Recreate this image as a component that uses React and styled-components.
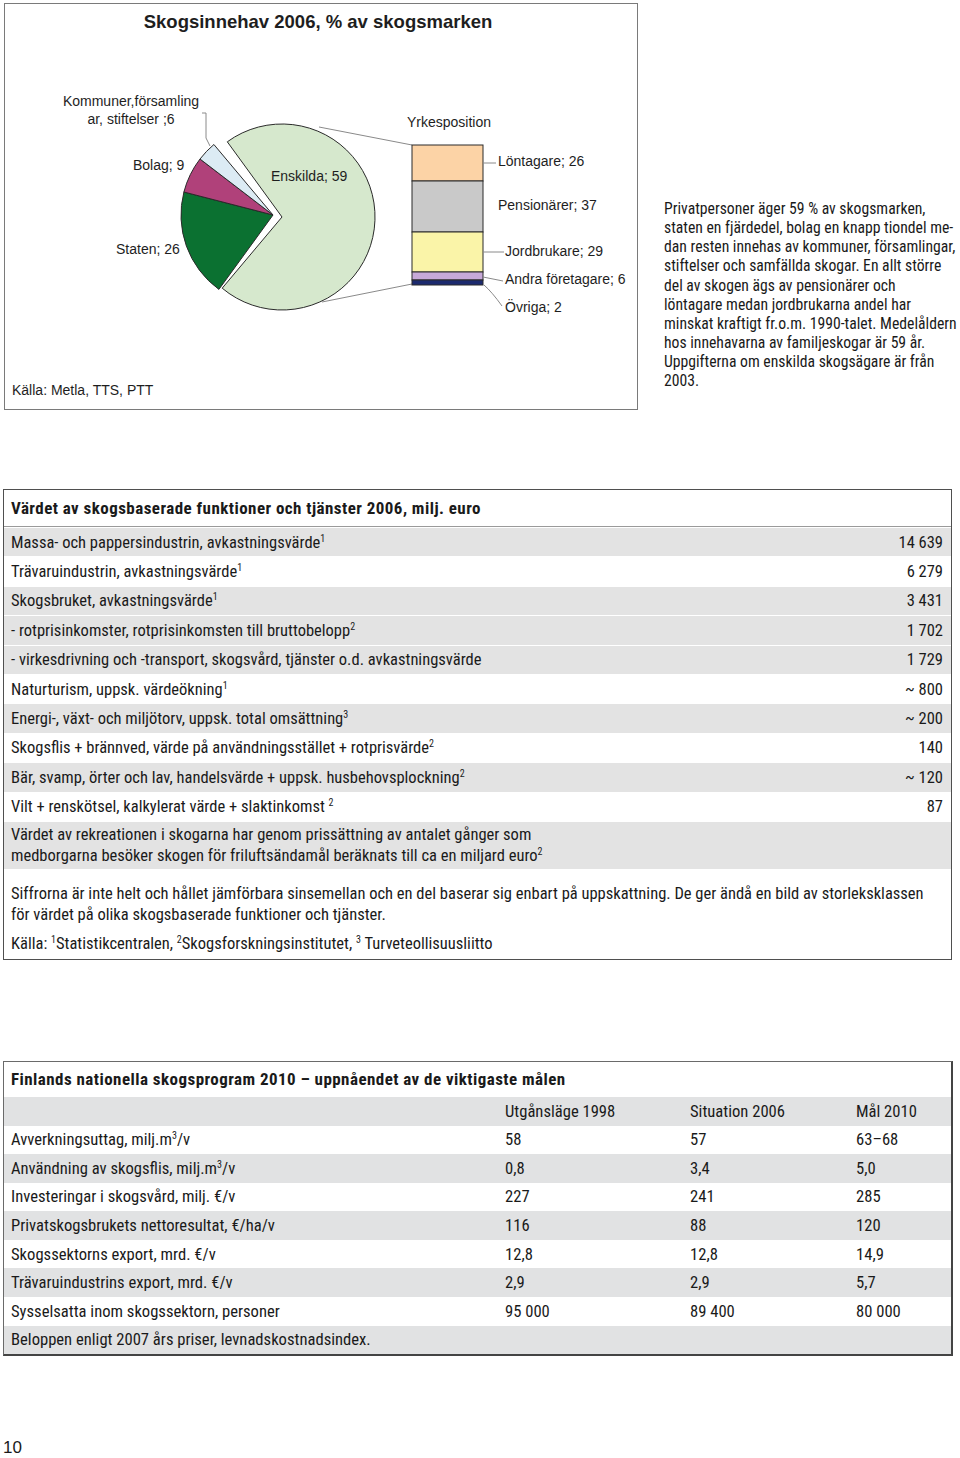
import React from 'react';
import styled, { createGlobalStyle } from 'styled-components';

const GlobalStyle = createGlobalStyle`
  html, body {
    margin: 0;
    padding: 0;
    background: #fff;
  }
  body {
    font-family: Roboto, "Liberation Sans", Arial, sans-serif;
    font-stretch: 75%;
    color: #1a1a1a;
  }
`;

const Page = styled.div`
  width: 960px;
`;

const TopSection = styled.div`
  display: flex;
  align-items: flex-start;
  padding: 3px 0 0 4px;
`;

const ChartFrame = styled.div`
  width: 634px;
  height: 407px;
  box-sizing: border-box;
  border: 1px solid #7a7a7a;
  background: #fff;

  svg {
    display: block;
  }
`;

const Caption = styled.div`
  margin: 196px 0 0 26px;
  font-size: 15.7px;
  line-height: 19.15px;
  color: #1a1a1a;
`;

const CaptionLine = styled.span`
  display: block;
  white-space: nowrap;
`;

const ValueTable = styled.div`
  margin: 79px 0 0 3px;
  width: 949px;
  box-sizing: border-box;
  border: 1px solid #4f4f4f;
  font-size: 16.5px;
`;

const TableTitle = styled.div`
  height: ${p => p.h}px;
  display: flex;
  align-items: center;
  padding: 0 7px;
  font-weight: bold;
  font-size: 17px;
  letter-spacing: 0.45px;
  border-bottom: ${p => (p.ruled ? '1px solid #9a9a9a' : 'none')};
  box-sizing: border-box;
  white-space: nowrap;
`;

const ValueRow = styled.div`
  display: flex;
  justify-content: space-between;
  align-items: center;
  height: ${p => p.h || 29.4}px;
  padding: 0 8px 0 7px;
  box-sizing: border-box;
  background: ${p => (p.shade ? '#e3e3e3' : '#fff')};
  border-top: 1px solid #fff;
  line-height: 21px;
  white-space: nowrap;
`;

const Sup = styled.sup`
  font-size: 10px;
  line-height: 0;
  vertical-align: 0;
  position: relative;
  top: -6px;
`;

const Footnotes = styled.div`
  padding: 14px 7px 5px;
  line-height: 21px;
`;

const FootLine = styled.div`
  margin-bottom: ${p => (p.gap ? 8 : 0)}px;
  white-space: nowrap;
`;

const GoalTable = styled.div`
  margin: 101px 0 0 3px;
  width: 950px;
  box-sizing: border-box;
  border: 1px solid #6a6a6a;
  border-right: 2px solid #444;
  border-bottom: 2px solid #444;
  font-size: 16.6px;
`;

const GoalRow = styled.div`
  display: grid;
  grid-template-columns: 494px 185px 166px 1fr;
  align-items: center;
  height: 28.6px;
  padding-left: 7px;
  background: ${p => (p.shade ? '#e1e2e3' : '#fff')};
  white-space: nowrap;
`;

const PageNumber = styled.div`
  margin: 83px 0 0 3px;
  font-family: "Liberation Sans", Arial, sans-serif;
  font-stretch: normal;
  font-size: 17px;
  line-height: 17px;
`;

const ChartText = styled.text`
  font-family: "Liberation Sans", Arial, sans-serif;
  font-stretch: normal;
  font-size: ${p => p.size || 14}px;
  font-weight: ${p => (p.bold ? 'bold' : 'normal')};
  fill: #1e1e1e;
`;

const pt = (cx, cy, r, deg) => {
  const a = (deg * Math.PI) / 180;
  return [cx + r * Math.cos(a), cy + r * Math.sin(a)];
};

const slice = (cx, cy, r, a0, a1) => {
  const [x0, y0] = pt(cx, cy, r, a0);
  const [x1, y1] = pt(cx, cy, r, a1);
  const large = a1 - a0 > 180 ? 1 : 0;
  return `M${cx},${cy} L${x0.toFixed(1)},${y0.toFixed(1)} A${r},${r} 0 ${large} 1 ${x1.toFixed(1)},${y1.toFixed(1)} Z`;
};

const pieSlices = [
  { a0: 126, a1: 194.5, fill: '#0b7131' },
  { a0: 194.5, a1: 217.5, fill: '#b0417a' },
  { a0: 217.5, a1: 230, fill: '#dcebf4' },
];

const barSegments = [
  { y0: 145, y1: 181, fill: '#fcd3a6' },
  { y0: 181, y1: 232, fill: '#c9c9c9' },
  { y0: 232, y1: 272, fill: '#faf4a8' },
  { y0: 272, y1: 280, fill: '#c7a9d8' },
  { y0: 280, y1: 285, fill: '#1c2a6e' },
];

const OwnershipChart = () => (
  <svg width="632" height="405" viewBox="5 4 632 405">
    <ChartText x="318" y="28" size={18.5} bold textAnchor="middle">
      Skogsinnehav 2006, % av skogsmarken
    </ChartText>

    {pieSlices.map((s, i) => (
      <path key={i} d={slice(273, 215, 92, s.a0, s.a1)} fill={s.fill} stroke="#2a2a2a" strokeWidth="1" />
    ))}
    <path d={slice(282, 217, 93, 234, 490)} fill="#d6e8cd" stroke="#2a2a2a" strokeWidth="1" />

    <polyline points="202,113 206,113 206,138 210,146" fill="none" stroke="#8a8a8a" strokeWidth="1" />
    <line x1="319" y1="127" x2="412" y2="145" stroke="#8a8a8a" strokeWidth="1" />
    <line x1="322" y1="302" x2="412" y2="284" stroke="#8a8a8a" strokeWidth="1" />

    {barSegments.map((s, i) => (
      <rect key={i} x="412" y={s.y0} width="71" height={s.y1 - s.y0} fill={s.fill} stroke="#2a2a2a" strokeWidth="1" />
    ))}

    <line x1="483" y1="163" x2="496" y2="163" stroke="#8a8a8a" strokeWidth="1" />
    <line x1="483" y1="252" x2="504" y2="252" stroke="#8a8a8a" strokeWidth="1" />
    <line x1="483" y1="277" x2="503" y2="281" stroke="#8a8a8a" strokeWidth="1" />
    <path d="M484,285 Q492,292 502,306" fill="none" stroke="#8a8a8a" strokeWidth="1" />

    <ChartText x="131" y="106" textAnchor="middle">Kommuner,församling</ChartText>
    <ChartText x="131" y="124" textAnchor="middle">ar, stiftelser ;6</ChartText>
    <ChartText x="133" y="170">Bolag; 9</ChartText>
    <ChartText x="116" y="254">Staten; 26</ChartText>
    <ChartText x="271" y="181">Enskilda; 59</ChartText>
    <ChartText x="407" y="127">Yrkesposition</ChartText>
    <ChartText x="498" y="166">Löntagare; 26</ChartText>
    <ChartText x="498" y="210">Pensionärer; 37</ChartText>
    <ChartText x="505" y="256">Jordbrukare; 29</ChartText>
    <ChartText x="505" y="284">Andra företagare; 6</ChartText>
    <ChartText x="505" y="312">Övriga; 2</ChartText>
    <ChartText x="12" y="395">Källa: Metla, TTS, PTT</ChartText>
  </svg>
);

const captionLines = [
  'Privatpersoner äger 59 % av skogsmarken,',
  'staten en fjärdedel, bolag en knapp tiondel me-',
  'dan resten innehas av kommuner, församlingar,',
  'stiftelser och samfällda skogar. En allt större',
  'del av skogen ägs av pensionärer och',
  'löntagare medan jordbrukarna andel har',
  'minskat kraftigt fr.o.m. 1990-talet. Medelåldern',
  'hos innehavarna av familjeskogar är 59 år.',
  'Uppgifterna om enskilda skogsägare är från',
  '2003.',
];

const valueRows = [
  { label: 'Massa- och pappersindustrin, avkastningsvärde', sup: '1', value: '14 639', shade: true },
  { label: 'Trävaruindustrin, avkastningsvärde', sup: '1', value: '6 279' },
  { label: 'Skogsbruket, avkastningsvärde', sup: '1', value: '3 431', shade: true },
  { label: '- rotprisinkomster, rotprisinkomsten till bruttobelopp', sup: '2', value: '1 702', shade: true },
  { label: '- virkesdrivning och -transport, skogsvård, tjänster o.d. avkastningsvärde', value: '1 729', shade: true },
  { label: 'Naturturism, uppsk. värdeökning', sup: '1', value: '~ 800' },
  { label: 'Energi-, växt- och miljötorv, uppsk. total omsättning', sup: '3', value: '~ 200', shade: true },
  { label: 'Skogsflis + brännved, värde på användningsstället + rotprisvärde', sup: '2', value: '140' },
  { label: 'Bär, svamp, örter och lav, handelsvärde + uppsk. husbehovsplockning', sup: '2', value: '~ 120', shade: true },
  { label: 'Vilt + renskötsel, kalkylerat värde + slaktinkomst ', sup: '2', value: '87' },
];

const goalRows = [
  { label: <>Avverkningsuttag, milj.m<Sup>3</Sup>/v</>, values: ['58', '57', '63–68'] },
  { label: <>Användning av skogsflis, milj.m<Sup>3</Sup>/v</>, values: ['0,8', '3,4', '5,0'], shade: true },
  { label: 'Investeringar i skogsvård, milj. €/v', values: ['227', '241', '285'] },
  { label: 'Privatskogsbrukets nettoresultat, €/ha/v', values: ['116', '88', '120'], shade: true },
  { label: 'Skogssektorns export, mrd. €/v', values: ['12,8', '12,8', '14,9'] },
  { label: 'Trävaruindustrins export, mrd. €/v', values: ['2,9', '2,9', '5,7'], shade: true },
  { label: 'Sysselsatta inom skogssektorn, personer', values: ['95 000', '89 400', '80 000'] },
];

export default function App() {
  return (
    <Page>
      <GlobalStyle />
      <TopSection>
        <ChartFrame>
          <OwnershipChart />
        </ChartFrame>
        <Caption>
          {captionLines.map((line, i) => (
            <CaptionLine key={i}>{line}</CaptionLine>
          ))}
        </Caption>
      </TopSection>

      <ValueTable>
        <TableTitle h={37} ruled>
          Värdet av skogsbaserade funktioner och tjänster 2006, milj. euro
        </TableTitle>
        {valueRows.map((row, i) => (
          <ValueRow key={i} shade={row.shade}>
            <span>
              {row.label}
              {row.sup && <Sup>{row.sup}</Sup>}
            </span>
            <span>{row.value}</span>
          </ValueRow>
        ))}
        <ValueRow shade h={48}>
          <span>
            Värdet av rekreationen i skogarna har genom prissättning av antalet gånger som
            <br />
            medborgarna besöker skogen för friluftsändamål beräknats till ca en miljard euro<Sup>2</Sup>
          </span>
        </ValueRow>
        <Footnotes>
          <FootLine>
            Siffrorna är inte helt och hållet jämförbara sinsemellan och en del baserar sig enbart på uppskattning. De ger ändå en bild av storleksklassen
          </FootLine>
          <FootLine gap>för värdet på olika skogsbaserade funktioner och tjänster.</FootLine>
          <FootLine>
            Källa: <Sup>1</Sup>Statistikcentralen, <Sup>2</Sup>Skogsforskningsinstitutet, <Sup>3</Sup> Turveteollisuusliitto
          </FootLine>
        </Footnotes>
      </ValueTable>

      <GoalTable>
        <TableTitle h={35}>
          Finlands nationella skogsprogram 2010 – uppnåendet av de viktigaste målen
        </TableTitle>
        <GoalRow shade>
          <span />
          <span>Utgånsläge 1998</span>
          <span>Situation 2006</span>
          <span>Mål 2010</span>
        </GoalRow>
        {goalRows.map((row, i) => (
          <GoalRow key={i} shade={row.shade}>
            <span>{row.label}</span>
            {row.values.map((v, j) => (
              <span key={j}>{v}</span>
            ))}
          </GoalRow>
        ))}
        <GoalRow shade>
          <span>Beloppen enligt 2007 års priser, levnadskostnadsindex.</span>
        </GoalRow>
      </GoalTable>

      <PageNumber>10</PageNumber>
    </Page>
  );
}
